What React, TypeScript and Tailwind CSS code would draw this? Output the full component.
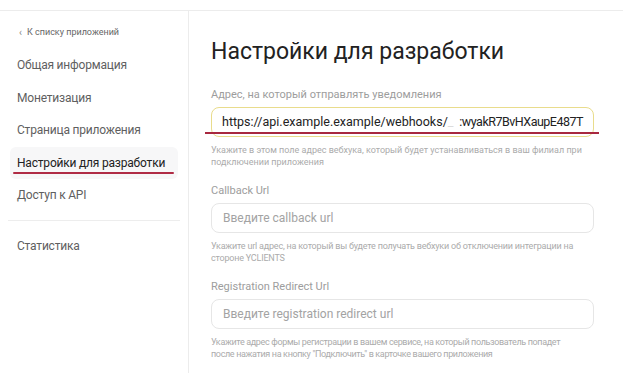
const menu = [
  { label: 'Общая информация' },
  { label: 'Монетизация' },
  { label: 'Страница приложения' },
  { label: 'Настройки для разработки', active: true },
  { label: 'Доступ к API' },
]

function HelpText({ lines, tight = '' }: { lines: string[]; tight?: string }) {
  return (
    <p className={`mt-[7px] text-[9px] leading-[12px] text-[#ababab] whitespace-nowrap ${tight}`}>
      {lines.map((l, i) => (
        <span key={i} className="block">
          {l}
        </span>
      ))}
    </p>
  )
}

function Field({
  label,
  placeholder,
  help,
  tight,
}: {
  label: string
  placeholder: string
  help: string[]
  tight?: string
}) {
  return (
    <div className="mt-[16px]">
      <div className="text-[11px] leading-[14px] text-[#9d9d9d]">{label}</div>
      <div className="mt-[5px] h-[30px] w-[383px] rounded-[8px] border border-[#e6e6e6] flex items-center px-[11px]">
        <span className="text-[12px] text-[#a3a3a3]">{placeholder}</span>
      </div>
      <HelpText lines={help} tight={tight} />
    </div>
  )
}

export default function App() {
  return (
    <div className="w-[623px] h-[373px] bg-white overflow-hidden font-['Roboto',sans-serif] flex flex-col">
      <div className="h-[10px] shrink-0" />
      <div className="flex-1 flex border-t border-[#ececec]">
        {/* боковое меню */}
        <aside className="w-[189px] shrink-0 border-r border-[#ececec] flex flex-col">
          <div className="mt-[12px] h-[20px] flex items-center pl-[19px] gap-[5px] text-[9px] text-[#666]">
            <span className="text-[10px] leading-none text-[#888]">‹</span>
            <span>К списку приложений</span>
          </div>
          <nav className="mt-[6px] flex flex-col">
            {menu.map((item) => (
              <div
                key={item.label}
                className={`relative mx-[10px] h-[32.5px] rounded-[6px] flex items-center px-[7px] text-[12px] tracking-[-0.2px] whitespace-nowrap ${
                  item.active ? 'bg-[#f7f7f8] text-[#222]' : 'text-[#5f5f5f]'
                }`}
              >
                {item.label}
                {item.active && (
                  <span className="absolute left-[3px] right-[4px] bottom-[5px] h-[2px] rounded-full bg-[#b02c45]" />
                )}
              </div>
            ))}
          </nav>
          <div className="mt-[8px] mx-[8px] border-t border-[#ededed]" />
          <div className="mt-[9px] mx-[10px] h-[32.5px] flex items-center px-[7px] text-[12px] tracking-[-0.2px] text-[#5f5f5f]">
            Статистика
          </div>
        </aside>

        {/* основная часть */}
        <main className="flex-1 pl-[22px]">
          <h1 className="mt-[25px] text-[23px] leading-[32px] text-[#222] font-normal">
            Настройки для разработки
          </h1>

          <div className="mt-[20px]">
            <div className="text-[11px] leading-[14px] text-[#9d9d9d]">
              Адрес, на который отправлять уведомления
            </div>
            <div className="relative mt-[5px] h-[30px] w-[383px] rounded-[8px] border-[1.5px] border-[#e9dc8c] flex items-center px-[10px] text-[12.5px] text-[#222] whitespace-nowrap">
              <span>https://api.example.example/webhooks/</span>
              <span className="inline-block w-[73px] text-[#dcdcdc]">_</span>
              <span className="tracking-[-0.5px]">:wyakR7BvHXaupE487T</span>
              <span className="absolute left-[-7px] right-[-6px] top-[24px] h-[2px] bg-[#a8283f]" />
            </div>
            <HelpText
              lines={[
                'Укажите в этом поле адрес вебхука, который будет устанавливаться в ваш филиал при',
                'подключении приложения',
              ]}
            />
          </div>

          <Field
            label="Callback Url"
            placeholder="Введите callback url"
            tight="tracking-[-0.2px]"
            help={[
              'Укажите url адрес, на который вы будете получать вебхуки об отключении интеграции на',
              'стороне YCLIENTS',
            ]}
          />
          <Field
            label="Registration Redirect Url"
            placeholder="Введите registration redirect url"
            tight="tracking-[-0.35px]"
            help={[
              'Укажите адрес формы регистрации в вашем сервисе, на который пользователь попадет',
              'после нажатия на кнопку "Подключить" в карточке вашего приложения',
            ]}
          />
        </main>
      </div>
    </div>
  )
}
